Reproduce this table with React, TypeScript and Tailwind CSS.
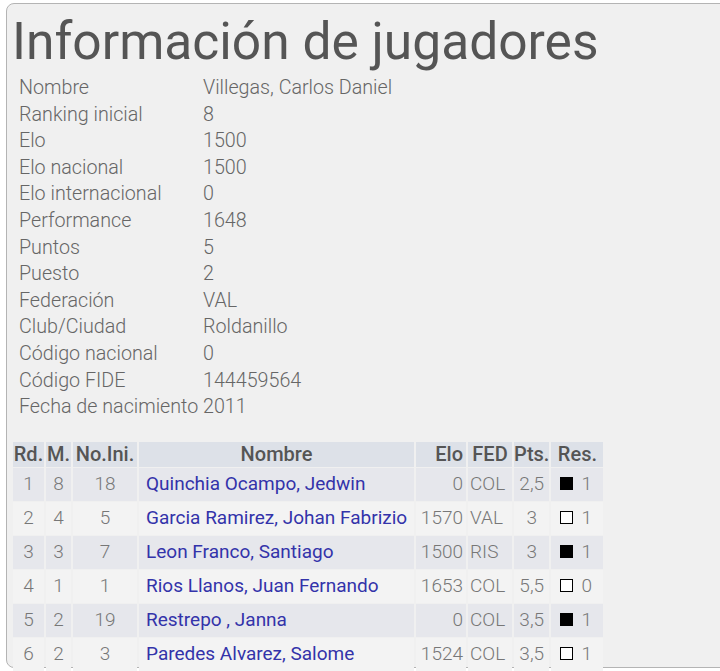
import React from "react";

const info: [string, string][] = [
  ["Nombre", "Villegas, Carlos Daniel"],
  ["Ranking inicial", "8"],
  ["Elo", "1500"],
  ["Elo nacional", "1500"],
  ["Elo internacional", "0"],
  ["Performance", "1648"],
  ["Puntos", "5"],
  ["Puesto", "2"],
  ["Federación", "VAL"],
  ["Club/Ciudad", "Roldanillo"],
  ["Código nacional", "0"],
  ["Código FIDE", "144459564"],
  ["Fecha de nacimiento", "2011"],
];

type Row = {
  rd: number;
  m: number;
  ini: number;
  name: string;
  elo: number;
  fed: string;
  pts: string;
  black: boolean;
  res: string;
};

const rows: Row[] = [
  { rd: 1, m: 8, ini: 18, name: "Quinchia Ocampo, Jedwin", elo: 0, fed: "COL", pts: "2,5", black: true, res: "1" },
  { rd: 2, m: 4, ini: 5, name: "Garcia Ramirez, Johan Fabrizio", elo: 1570, fed: "VAL", pts: "3", black: false, res: "1" },
  { rd: 3, m: 3, ini: 7, name: "Leon Franco, Santiago", elo: 1500, fed: "RIS", pts: "3", black: true, res: "1" },
  { rd: 4, m: 1, ini: 1, name: "Rios Llanos, Juan Fernando", elo: 1653, fed: "COL", pts: "5,5", black: false, res: "0" },
  { rd: 5, m: 2, ini: 19, name: "Restrepo , Janna", elo: 0, fed: "COL", pts: "3,5", black: true, res: "1" },
  { rd: 6, m: 2, ini: 3, name: "Paredes Alvarez, Salome", elo: 1524, fed: "COL", pts: "3,5", black: false, res: "1" },
];

export default function App() {
  return (
    <div
      className="w-[720px] h-[671px] bg-white overflow-hidden pt-[3px] pl-[6px]"
      style={{ fontFamily: "Roboto, 'Noto Sans', sans-serif" }}
    >
      <div className="w-[730px] h-[665px] bg-[#f0f0f0] border border-[#b4b4b4] rounded-[8px] pl-[5px] pt-[7px]">
        <h1 className="text-[51.5px] leading-[61px] text-[#555555] font-normal whitespace-nowrap">
          Información de jugadores
        </h1>
        <div className="mt-[3px] pl-[7px] text-[19.7px] font-light text-[#666666]">
          {info.map(([k, v]) => (
            <div key={k} className="flex leading-[26.6px] whitespace-nowrap">
              <div className="w-[184px]">{k}</div>
              <div>{v}</div>
            </div>
          ))}
        </div>
        <table className="mt-[20px] table-fixed border-separate border-spacing-x-[2px] border-spacing-y-[1px] -ml-[1px] text-[19px] whitespace-nowrap">
          <thead>
            <tr className="bg-[#dde1e8] text-[#555555] text-[20px] leading-[25px]">
              <th className="w-[31px] px-0 font-medium">Rd.</th>
              <th className="w-[25px] px-0 font-medium">M.</th>
              <th className="w-[64px] px-0 font-medium">No.Ini.</th>
              <th className="w-[275px] px-1 font-medium">Nombre</th>
              <th className="w-[50px] pr-[3px] font-medium text-right">Elo</th>
              <th className="w-[44px] px-0 font-medium">FED</th>
              <th className="w-[35px] px-0 font-medium">Pts.</th>
              <th className="w-[52px] px-0 font-medium">Res.</th>
            </tr>
          </thead>
          <tbody>
            {rows.map((r, i) => (
              <tr
                key={r.rd}
                className={`${i % 2 === 0 ? "bg-[#e6e7ec]" : "bg-[#f3f3f3]"} h-[33px] font-light text-[#777777]`}
              >
                <td className="px-0 text-center">{r.rd}</td>
                <td className="px-0 text-center">{r.m}</td>
                <td className="px-0 text-center">{r.ini}</td>
                <td className="pl-[7px] pr-0 text-left text-[#3333aa] font-normal">{r.name}</td>
                <td className="pr-[3px] text-right">{r.elo}</td>
                <td className="pl-[2px] text-left">{r.fed}</td>
                <td className="px-0 text-center">{r.pts}</td>
                <td className="pl-[9px] pr-0 text-left">
                  <span className="inline-flex items-center gap-[8px]">
                    <span
                      className={`inline-block w-[13px] h-[13px] border border-black ${r.black ? "bg-black" : "bg-white"}`}
                    />
                    <span>{r.res}</span>
                  </span>
                </td>
              </tr>
            ))}
          </tbody>
        </table>
      </div>
    </div>
  );
}
